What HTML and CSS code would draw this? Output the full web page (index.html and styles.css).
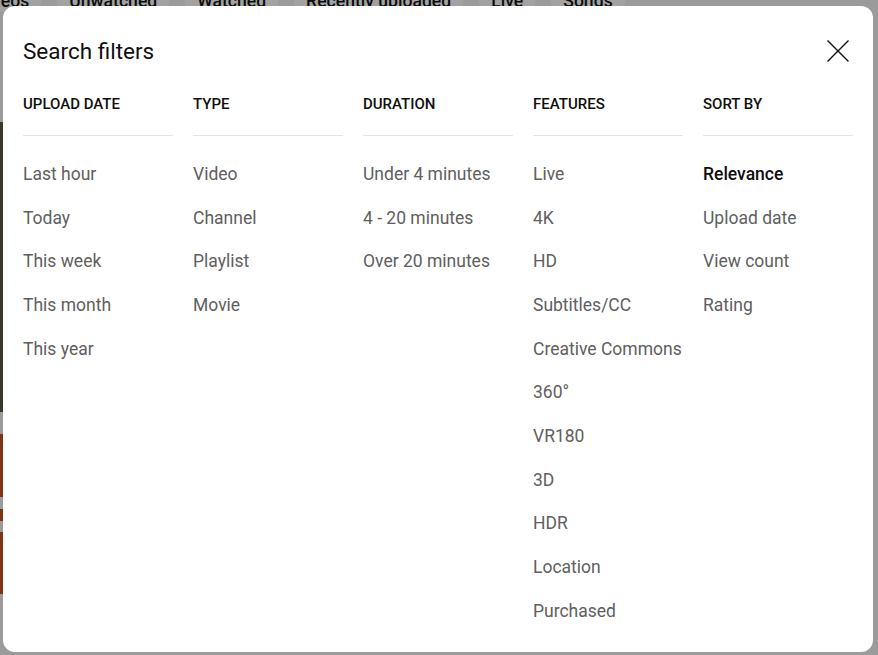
FILE: index.html
```html
<!DOCTYPE html>
<html lang="en">
<head>
<meta charset="utf-8">
<title>Search filters</title>
<link rel="stylesheet" href="styles.css">
</head>
<body>
<div class="page">
  <div class="chips">
    <span class="chip chip-first">Videos</span>
    <span class="chip">Unwatched</span>
    <span class="chip">Watched</span>
    <span class="chip">Recently uploaded</span>
    <span class="chip">Live</span>
    <span class="chip">Songs</span>
  </div>
  <div class="thumbs">
    <div class="thumb t-gap" style="height:110px"></div>
    <div class="thumb t-dark" style="height:290px"></div>
    <div class="thumb t-gap" style="height:22px"></div>
    <div class="thumb t-orange" style="height:63px"></div>
    <div class="thumb t-gap" style="height:12px"></div>
    <div class="thumb t-orange" style="height:12px"></div>
    <div class="thumb t-gap" style="height:11px"></div>
    <div class="thumb t-orange" style="height:62px"></div>
  </div>
</div>

<div class="dialog" role="dialog" aria-label="Search filters">
  <div class="dialog-head">
    <h2 class="dialog-title">Search filters</h2>
    <button class="close-btn" aria-label="Close">
      <svg width="24" height="24" viewBox="0 0 24 24"><path d="M1.5 1.5 L22.5 22.5 M22.5 1.5 L1.5 22.5" stroke="#0f0f0f" stroke-width="1.4" fill="none"/></svg>
    </button>
  </div>
  <div class="groups">
    <div class="group">
      <div class="group-title">Upload date</div>
      <ul class="options">
        <li>Last hour</li><li>Today</li><li>This week</li><li>This month</li><li>This year</li>
      </ul>
    </div>
    <div class="group">
      <div class="group-title">Type</div>
      <ul class="options">
        <li>Video</li><li>Channel</li><li>Playlist</li><li>Movie</li>
      </ul>
    </div>
    <div class="group">
      <div class="group-title">Duration</div>
      <ul class="options">
        <li>Under 4 minutes</li><li>4 - 20 minutes</li><li>Over 20 minutes</li>
      </ul>
    </div>
    <div class="group">
      <div class="group-title">Features</div>
      <ul class="options">
        <li>Live</li><li>4K</li><li>HD</li><li>Subtitles/CC</li><li>Creative Commons</li><li>360°</li><li>VR180</li><li>3D</li><li>HDR</li><li>Location</li><li>Purchased</li>
      </ul>
    </div>
    <div class="group">
      <div class="group-title">Sort by</div>
      <ul class="options">
        <li class="selected">Relevance</li><li>Upload date</li><li>View count</li><li>Rating</li>
      </ul>
    </div>
  </div>
</div>
</body>
</html>
```

FILE: styles.css
```css
html, body {
  margin: 0;
  padding: 0;
  height: 100%;
  overflow: hidden;
}

body {
  background: #9b9b9b;
  font-family: Roboto, "Liberation Sans", Arial, sans-serif;
}

.page {
  height: 100%;
}

.chips {
  display: flex;
  gap: 16px;
  margin-top: -10px;
  margin-left: -37px;
  white-space: nowrap;
}

.chip {
  padding: 0 12px;
  font-size: 17.6px;
  line-height: 22px;
  font-weight: 500;
  color: #0c0c0c;
  background: #a2a2a2;
  border-radius: 8px;
}

.thumbs {
  width: 3px;
  display: flex;
  flex-direction: column;
}

.thumb { width: 3px; }
.t-gap { background: #9b9b9b; }
.t-dark { background: #3a3829; }
.t-orange { background: #7e3410; }

.dialog {
  position: fixed;
  left: 3px;
  top: 6px;
  width: 870px;
  height: 646px;
  box-sizing: border-box;
  padding: 25px 20px 0 20px;
  background: #ffffff;
  border-radius: 12px;
  color: #0f0f0f;
}

.dialog-head {
  display: flex;
  align-items: center;
  justify-content: space-between;
  height: 40px;
}

.dialog-title {
  margin: 0;
  font-size: 22.5px;
  font-weight: 400;
  line-height: 30px;
  color: #0f0f0f;
}

.close-btn {
  width: 40px;
  height: 40px;
  margin-right: -5px;
  padding: 0;
  border: 0;
  background: transparent;
  display: flex;
  align-items: center;
  justify-content: center;
}

.groups {
  display: grid;
  grid-template-columns: repeat(5, 150px);
  column-gap: 20px;
  margin-top: 23px;
}

.group-title {
  font-size: 15px;
  line-height: 20px;
  font-weight: 500;
  text-transform: uppercase;
  color: #0f0f0f;
  padding-bottom: 21px;
  border-bottom: 1px solid #e5e5e5;
}

.options {
  list-style: none;
  margin: 16px 0 0 0;
  padding: 0;
}

.options li {
  height: 43.7px;
  display: flex;
  align-items: center;
  font-size: 17.5px;
  color: #606060;
  white-space: nowrap;
}

.options li.selected {
  color: #0f0f0f;
  font-weight: 500;
}
```
